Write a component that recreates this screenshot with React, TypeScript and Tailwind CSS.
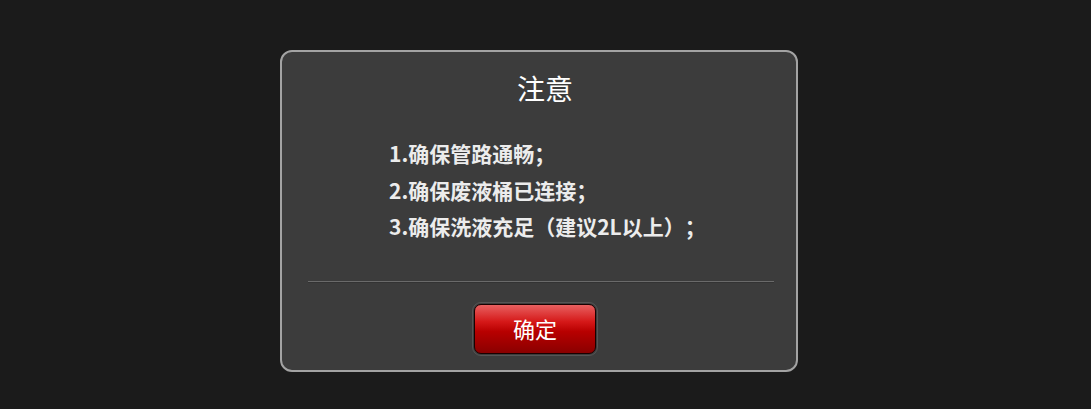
const font = { fontFamily: '"Noto Sans CJK SC", "Noto Sans", sans-serif' };

const notes = [
  "1.确保管路通畅；",
  "2.确保废液桶已连接；",
  "3.确保洗液充足（建议2L以上）；",
];

export default function App() {
  return (
    <div
      className="h-[409px] w-[1091px] bg-[#1b1b1b] pl-[280px] pt-[50px] [text-spacing-trim:space-all]"
      style={font}
    >
      <div className="flex h-[322px] w-[518px] flex-col rounded-[12px] border-2 border-[#a3a3a3] bg-[#3c3c3c]">
        <h2 className="mt-[18px] pl-[12px] text-center text-[28px] font-normal leading-[36px] text-white">
          注意
        </h2>

        <ul className="mt-[29px] pl-[107px]">
          {notes.map((n) => (
            <li
              key={n}
              className="text-[21px] font-bold leading-[36.5px] text-[#ececec]"
            >
              {n}
            </li>
          ))}
        </ul>

        <div className="ml-[26px] mt-[36px] w-[466px] border-t border-[#6a6a6a] shadow-[0_1px_0_#333]" />

        <div className="ml-[190px] mt-[20px] w-[126px] rounded-[9px] border border-[#555] p-px">
          <button className="flex h-[50px] w-full items-center justify-center rounded-[7px] border border-[#1a0000] bg-[linear-gradient(to_bottom,#e86060_0%,#d51818_35%,#b80000_55%,#8a0000_100%)] text-[22px] text-white">
            确定
          </button>
        </div>
      </div>
    </div>
  );
}
